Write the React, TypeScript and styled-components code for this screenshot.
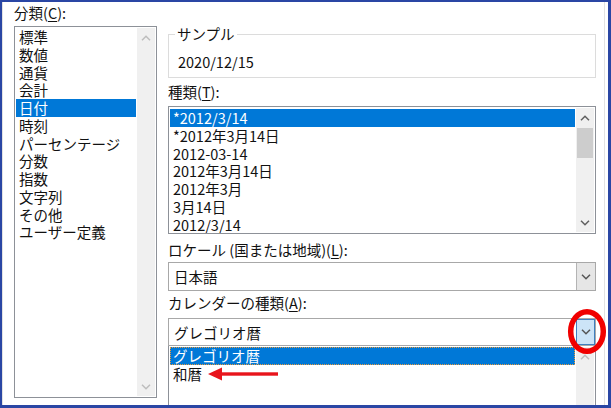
import styled, { createGlobalStyle } from 'styled-components'

const GlobalStyle = createGlobalStyle`
  html, body {
    margin: 0;
    padding: 0;
    background: #fff;
  }
  body {
    font-family: "Noto Sans CJK JP", "Noto Sans", sans-serif;
    font-size: 14.5px;
    color: #111;
  }
`

const Frame = styled.div`
  width: 611px;
  height: 408px;
  box-sizing: border-box;
  border: 2px solid #2a46a4;
  border-right-width: 3px;
  border-bottom-width: 3px;
  background: #fff;
  overflow: hidden;
  display: flex;
`

const Page = styled.div`
  flex: 1;
  margin-right: 3px;
  border-left: 1px solid #e2e2e2;
  border-right: 1px solid #e2e2e2;
  padding-left: 11px;
  display: grid;
  grid-template-columns: 143px 428px;
  column-gap: 11px;
  align-items: start;
`

const Column = styled.div`
  display: flex;
  flex-direction: column;
`

const Label = styled.div<{ $top: number }>`
  margin-top: ${({ $top }) => $top}px;
  height: 18px;
  line-height: 18px;
  white-space: nowrap;
  u {
    text-decoration-thickness: 1px;
    text-underline-offset: 2px;
  }
`

const ListBox = styled.div<{ $top: number; $height: number; $pad: number }>`
  margin-top: ${({ $top }) => $top}px;
  height: ${({ $height }) => $height}px;
  box-sizing: border-box;
  border: 1px solid #8d9198;
  display: flex;
  background: #fff;
  .items {
    flex: 1;
    padding: ${({ $pad }) => $pad}px 1px 0 1px;
    overflow: hidden;
  }
`

const Item = styled.div<{ $selected?: boolean; $focus?: boolean }>`
  height: 17.75px;
  line-height: 17.75px;
  padding-left: 3px;
  white-space: nowrap;
  display: flex;
  align-items: center;
  background: ${({ $selected }) => ($selected ? '#0078d7' : 'transparent')};
  color: ${({ $selected }) => ($selected ? '#fff' : '#111')};
  outline: ${({ $focus }) => ($focus ? '1px dotted #e89a3c' : 'none')};
  outline-offset: -1px;
`

const ScrollBar = styled.div`
  width: 18px;
  margin: 1px 1px 1px 0;
  background: #f0f0f0;
  display: flex;
  flex-direction: column;
`

const ArrowCell = styled.div<{ $disabled?: boolean }>`
  height: 19px;
  display: flex;
  align-items: center;
  justify-content: center;
  color: ${({ $disabled }) => ($disabled ? '#bdbdbd' : '#606060')};
  flex-shrink: 0;
`

const Thumb = styled.div`
  height: 30px;
  margin: 1px 1px 0 1px;
  background: #cdcdcd;
`

const Spacer = styled.div`
  flex: 1;
`

const GroupBox = styled.div`
  position: relative;
  margin-top: 32px;
  height: 44px;
  box-sizing: border-box;
  border: 1px solid #dcdcdc;
  padding: 18px 0 0 9px;
  line-height: 18px;
`

const Legend = styled.span`
  position: absolute;
  top: -10px;
  left: 6px;
  padding: 0 2px;
  background: #fff;
  line-height: 18px;
`

const Combo = styled.div<{ $top: number; $height: number }>`
  position: relative;
  margin-top: ${({ $top }) => $top}px;
  height: ${({ $height }) => $height}px;
  box-sizing: border-box;
  border: 1px solid #a8a8a8;
  display: flex;
  align-items: stretch;
  background: #fff;
`

const ComboText = styled.div`
  flex: 1;
  padding-left: 5px;
  display: flex;
  align-items: center;
`

const ComboButton = styled.div<{ $active?: boolean }>`
  width: 19px;
  box-sizing: border-box;
  display: flex;
  align-items: center;
  justify-content: center;
  color: #555;
  background: ${({ $active }) => ($active ? '#cce4f7' : '#e6e6e6')};
  border: ${({ $active }) => ($active ? '1px solid #3f7fbf' : 'none')};
  border-left: 1px solid ${({ $active }) => ($active ? '#3f7fbf' : '#b4b4b4')};
`

const Mark = styled.svg`
  position: absolute;
  left: 398px;
  top: -11px;
  pointer-events: none;
`

const Dropdown = styled.div`
  margin-top: -1px;
  height: 70px;
  border: 1px solid #8d9198;
  border-bottom: none;
  display: flex;
  background: #fff;
  .items {
    flex: 1;
    padding: 1px 1px 0 1px;
  }
`

const Pointer = styled.svg`
  margin-left: 6px;
`

const Chevron = ({ up }: { up?: boolean }) => (
  <svg width="10" height="6" viewBox="0 0 10 6">
    <polyline
      points={up ? '1,5.2 5,1.2 9,5.2' : '1,0.8 5,4.8 9,0.8'}
      fill="none"
      stroke="currentColor"
      strokeWidth="1.5"
    />
  </svg>
)

const categories = [
  '標準', '数値', '通貨', '会計', '日付', '時刻', 'パーセンテージ',
  '分数', '指数', '文字列', 'その他', 'ユーザー定義'
]

const types = [
  '*2012/3/14', '*2012年3月14日', '2012-03-14', '2012年3月14日',
  '2012年3月', '3月14日', '2012/3/14'
]

export default function App() {
  return (
    <>
      <GlobalStyle />
      <Frame>
        <Page>
          <Column>
            <Label $top={2}>分類(<u>C</u>):</Label>
            <ListBox $top={4} $height={372} $pad={1}>
              <div className="items">
                {categories.map((c) => (
                  <Item key={c} $selected={c === '日付'}>{c}</Item>
                ))}
              </div>
              <ScrollBar>
                <ArrowCell $disabled><Chevron up /></ArrowCell>
                <Spacer />
                <ArrowCell $disabled><Chevron /></ArrowCell>
              </ScrollBar>
            </ListBox>
          </Column>

          <Column>
            <GroupBox>
              <Legend>サンプル</Legend>
              2020/12/15
            </GroupBox>

            <Label $top={5}>種類(<u>T</u>):</Label>
            <ListBox $top={5} $height={128} $pad={2}>
              <div className="items">
                {types.map((t, i) => (
                  <Item key={t + i} $selected={i === 0}>{t}</Item>
                ))}
              </div>
              <ScrollBar>
                <ArrowCell><Chevron up /></ArrowCell>
                <Thumb />
                <Spacer />
                <ArrowCell><Chevron /></ArrowCell>
              </ScrollBar>
            </ListBox>

            <Label $top={7}>ロケール (国または地域)(<u>L</u>):</Label>
            <Combo $top={3} $height={29}>
              <ComboText>日本語</ComboText>
              <ComboButton><Chevron /></ComboButton>
            </Combo>

            <Label $top={3}>カレンダーの種類(<u>A</u>):</Label>
            <Combo $top={6} $height={28}>
              <ComboText>グレゴリオ暦</ComboText>
              <ComboButton $active><Chevron /></ComboButton>
              <Mark width="40" height="47" viewBox="0 0 40 47">
                <ellipse cx="20" cy="23.5" rx="16.3" ry="19.8" fill="none" stroke="#f00000" strokeWidth="5.5" />
              </Mark>
            </Combo>
            <Dropdown>
              <div className="items">
                <Item $selected $focus>グレゴリオ暦</Item>
                <Item>
                  和暦
                  <Pointer width="71" height="14" viewBox="0 0 71 14">
                    <polygon points="0,7 14,0.5 14,13.5" fill="#e8141c" />
                    <rect x="12" y="5.3" width="58" height="3.4" fill="#e8141c" />
                  </Pointer>
                </Item>
              </div>
              <ScrollBar>
                <ArrowCell $disabled><Chevron up /></ArrowCell>
                <Spacer />
              </ScrollBar>
            </Dropdown>
          </Column>
        </Page>
      </Frame>
    </>
  )
}
